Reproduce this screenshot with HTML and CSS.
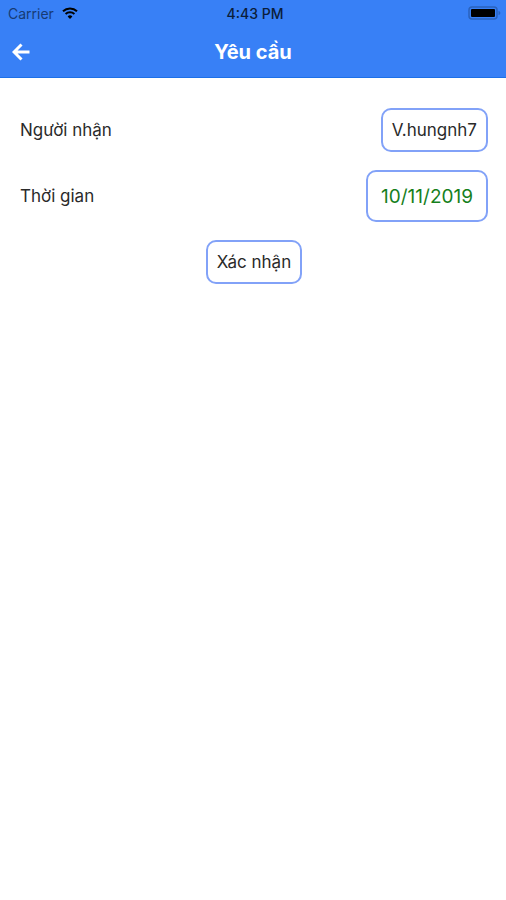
FILE: index.html
```html
<!DOCTYPE html>
<html lang="vi">
<head>
<meta charset="utf-8">
<meta name="viewport" content="width=device-width, initial-scale=1">
<title>Yêu cầu</title>
<link rel="stylesheet" href="styles.css">
</head>
<body>
<header class="header">
  <div class="status">
    <div class="carrier">
      <span>Carrier</span>
      <svg class="wifi" viewBox="0 0 16 12" aria-hidden="true">
        <path d="M1 4.2a10.2 10.2 0 0 1 14 0M3.6 7a6.4 6.4 0 0 1 8.8 0" fill="none" stroke="currentColor" stroke-width="2"/>
        <path d="M8 12 5.6 9.4a3.5 3.5 0 0 1 4.8 0Z" fill="currentColor"/>
      </svg>
    </div>
    <time class="clock">4:43 PM</time>
    <svg class="battery" viewBox="0 0 34 14" aria-hidden="true">
      <rect x="1" y="1" width="28" height="12" rx="3" fill="none" stroke="#2a62bd" stroke-width="1.5"/>
      <rect x="3" y="3" width="24" height="8" rx="1" fill="#000"/>
      <path d="M30.5 5c2.5.8 2.5 3.2 0 4Z" fill="#2a62bd"/>
    </svg>
  </div>
  <div class="navbar">
    <button class="back" type="button" aria-label="Quay lại">
      <svg class="arrow" viewBox="0 0 18 18" aria-hidden="true">
        <path d="M9.5 1.5 2 9l7.5 7.5M2.5 9H17.5" fill="none" stroke="currentColor" stroke-width="3"/>
      </svg>
    </button>
    <h1 class="title">Yêu cầu</h1>
  </div>
</header>
<main>
  <form class="form">
    <div class="row">
      <span class="label" id="recipient">Người nhận</span>
      <button class="field" type="button" aria-describedby="recipient">V.hungnh7</button>
    </div>
    <div class="row">
      <span class="label" id="date">Thời gian</span>
      <button class="field field-date" type="button" aria-describedby="date">10/11/2019</button>
    </div>
    <button class="field submit" type="button">Xác nhận</button>
  </form>
</main>
</body>
</html>
```

FILE: styles.css
```css
* {
  box-sizing: border-box;
}

body {
  margin: 0;
  background: #fff;
  color: #2a2a2a;
  font-family: Inter, "Liberation Sans", sans-serif;
  font-size: 17px;
}

button {
  font: inherit;
  color: inherit;
}

.header {
  background: #3880f6;
  border-bottom: 1px solid #1c70e8;
}

.status {
  display: grid;
  grid-template-columns: 1fr auto 1fr;
  align-items: center;
  height: 26px;
  padding: 0 4px 0 8px;
  color: #0b1d3a;
  font-size: 14px;
}

.carrier {
  display: flex;
  align-items: center;
  gap: 8px;
  color: #173b74;
}

.wifi {
  width: 16px;
  height: 12px;
  color: #000;
}

.clock {
  font-weight: 500;
}

.battery {
  width: 34px;
  height: 14px;
  justify-self: end;
}

.navbar {
  display: grid;
  grid-template-columns: 44px 1fr 44px;
  align-items: center;
  height: 51px;
  color: #fff;
}

.back {
  display: flex;
  padding: 12px;
  border: 0;
  background: none;
}

.arrow {
  width: 18px;
  height: 18px;
}

.title {
  margin: 0;
  font-size: 20px;
  font-weight: 700;
  text-align: center;
}

.form {
  display: flex;
  flex-direction: column;
  gap: 18px;
  padding: 30px 18px 30px 20px;
}

.row {
  display: flex;
  align-items: center;
  justify-content: space-between;
}

.field {
  height: 44px;
  padding: 0 9px;
  border: 2px solid #82a2f8;
  border-radius: 10px;
  background: #fff;
}

.field-date {
  height: 52px;
  padding: 0 13px;
  color: #16801c;
  font-size: 19px;
}

.submit {
  align-self: center;
}
```
